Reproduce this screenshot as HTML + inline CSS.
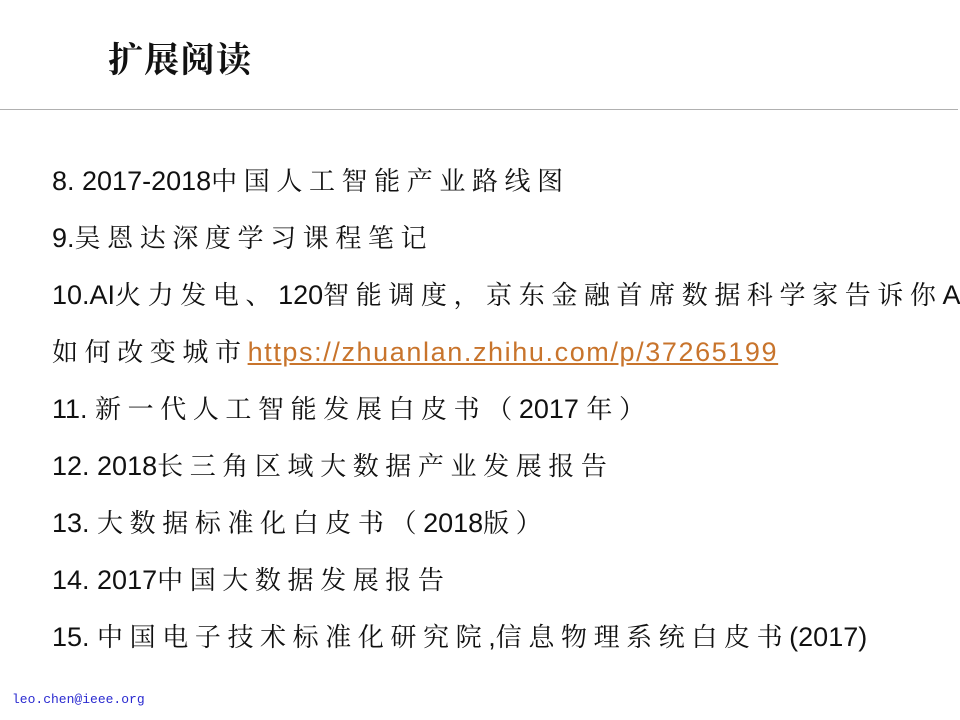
<!DOCTYPE html>
<html><head><meta charset="utf-8"><style>
html,body{margin:0;padding:0;background:#fff;width:960px;height:720px;overflow:hidden;position:relative}
.t{position:absolute;left:108px;top:33px;font-family:"Noto Serif CJK SC",serif;font-size:35px;font-weight:bold;letter-spacing:1px;color:#111}
.hr{position:absolute;left:0;top:109px;width:958px;height:1px;background:#b0b0b0}
.l{position:absolute;left:52px;white-space:nowrap;font-family:"Liberation Sans",sans-serif;font-size:27px;color:#111;line-height:32px;width:908px;overflow:hidden}
.c{font-family:"Noto Serif CJK SC",serif;font-size:26px;letter-spacing:6.6px}
a{color:#c8742c;text-decoration:underline;letter-spacing:1.6px}
.m{position:absolute;left:12px;top:692px;font-family:"Liberation Mono",monospace;font-size:13px;color:#2a2ad0}
</style></head><body>
<div class="t">扩展阅读</div>
<div class="hr"></div>
<div class="l" style="top:164px">8. 2017-2018<span class="c">中国人工智能产业路线图</span></div>
<div class="l" style="top:221px">9.<span class="c">吴恩达深度学习课程笔记</span></div>
<div class="l" style="top:278px">10.AI<span class="c">火力发电、</span>120<span class="c">智能调度，京东金融首席数据科学家告诉你</span>AI</div>
<div class="l" style="top:335px"><span class="c">如何改变城市</span><a>https://zhuanlan.zhihu.com/p/37265199</a></div>
<div class="l" style="top:392px">11. <span class="c">新一代人工智能发展白皮书（</span>2017 <span class="c">年）</span></div>
<div class="l" style="top:449px">12. 2018<span class="c">长三角区域大数据产业发展报告</span></div>
<div class="l" style="top:506px">13. <span class="c">大数据标准化白皮书（</span>2018<span class="c">版）</span></div>
<div class="l" style="top:563px">14. 2017<span class="c">中国大数据发展报告</span></div>
<div class="l" style="top:620px">15. <span class="c">中国电子技术标准化研究院</span>,<span class="c">信息物理系统白皮书</span>(2017)</div>
<div class="m">leo.chen@ieee.org</div>
</body></html>
